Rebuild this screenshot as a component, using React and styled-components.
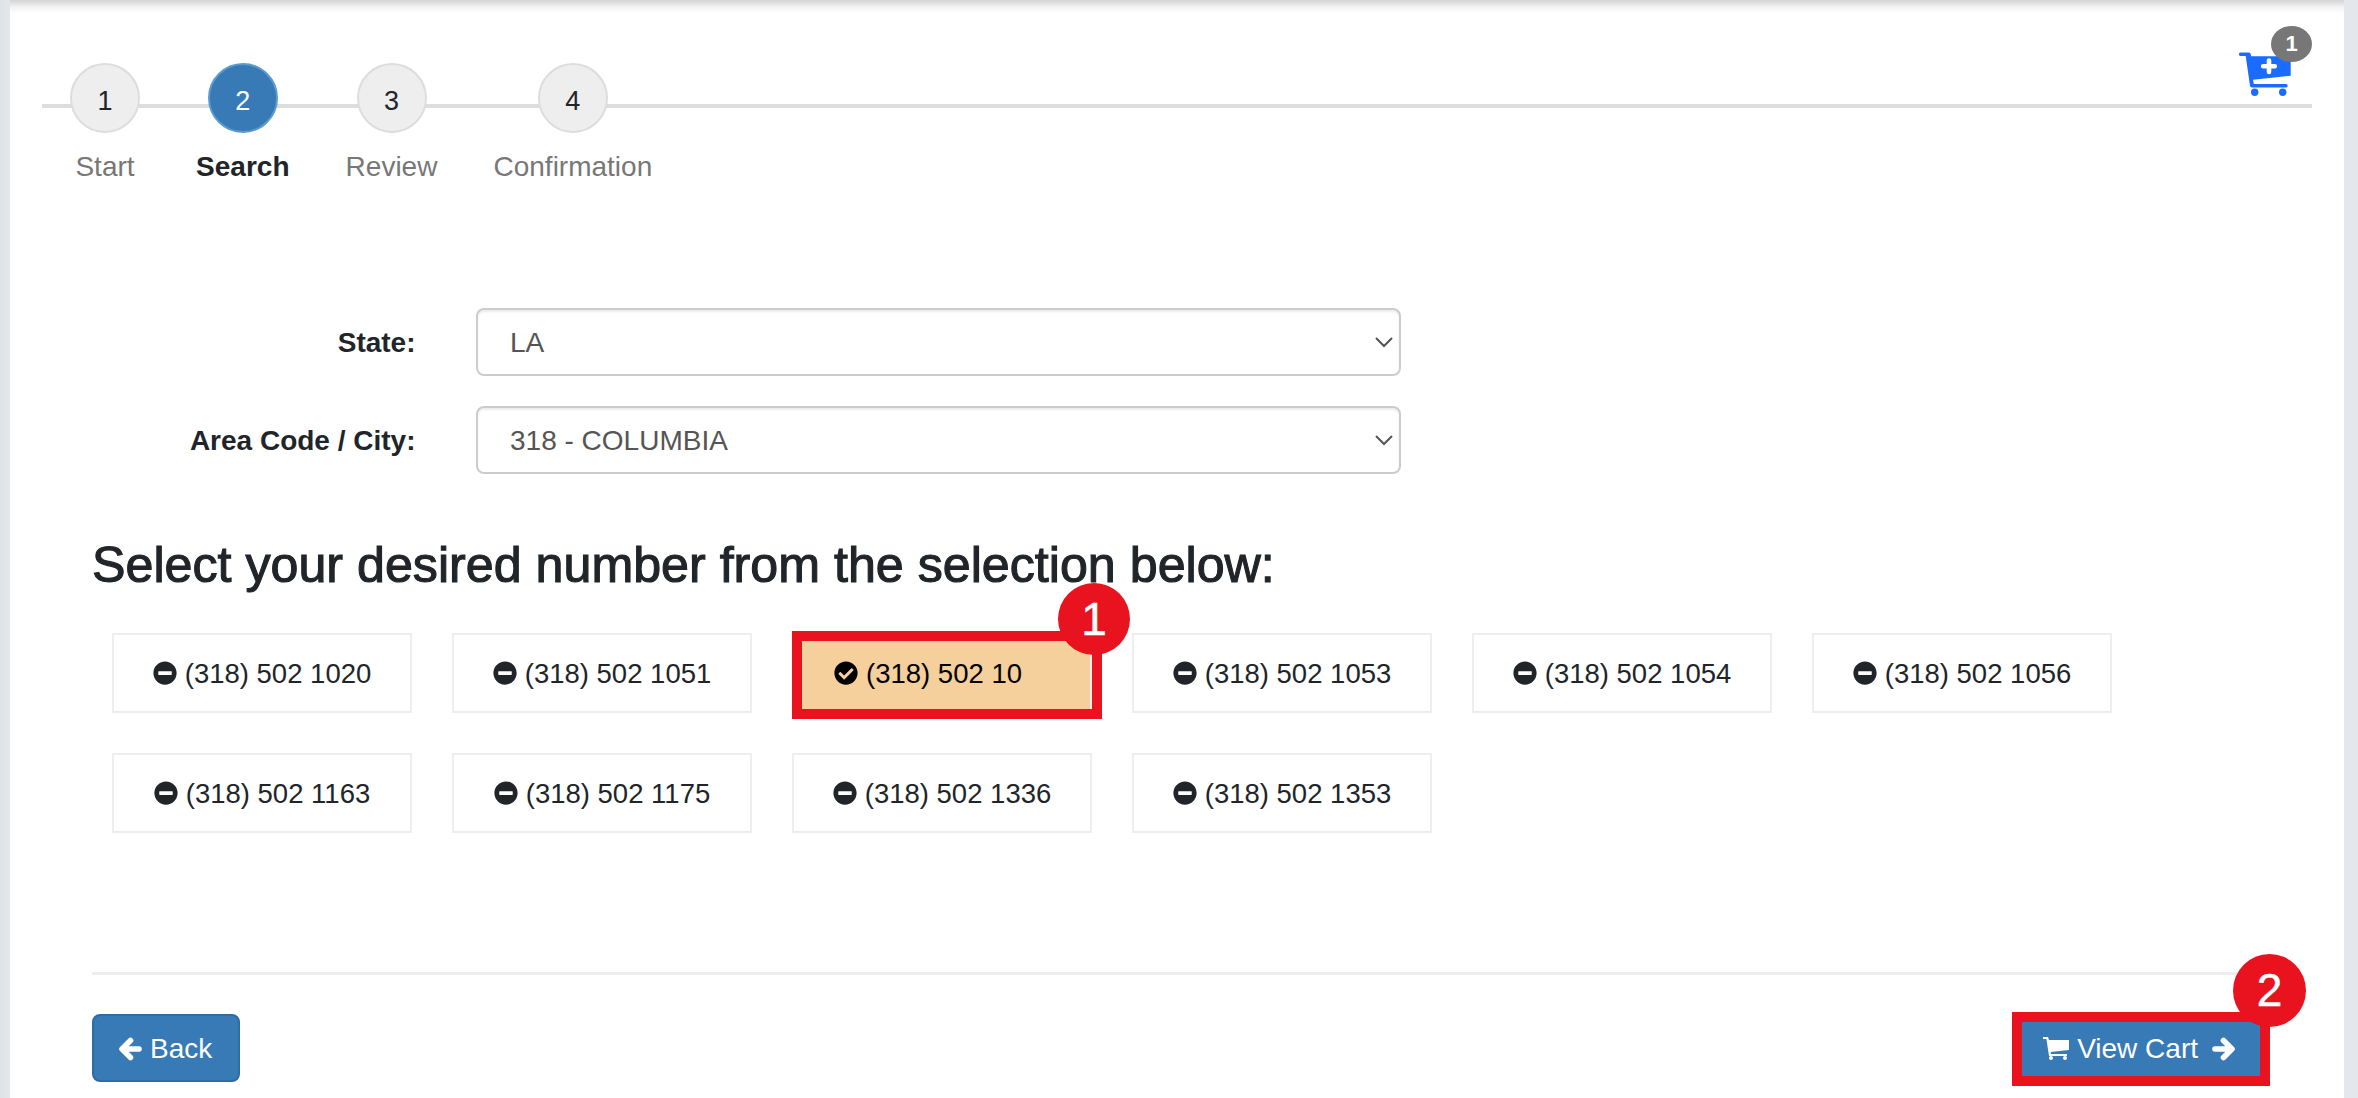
import React from 'react';
import styled, { createGlobalStyle } from 'styled-components';
import { FaCheckCircle, FaMinusCircle } from 'react-icons/fa';

const GlobalStyle = createGlobalStyle`
  html, body {
    margin: 0;
    padding: 0;
    background: #e9edf2;
  }
  body {
    font-family: "Liberation Sans", Arial, sans-serif;
    color: #212529;
    overflow: hidden;
  }
`

const Page = styled.div`
  width: 2358px;
  height: 1098px;
  padding: 0 14px 0 10px;
  box-sizing: border-box;
  background: linear-gradient(to right, #dee3e7 0, #e4e8ec 10px);
`

const Panel = styled.main`
  height: 1098px;
  box-sizing: border-box;
  padding-top: 63px;
  background: linear-gradient(to bottom, #d4d4d4 0, #f3f3f3 7px, #fff 14px);
  overflow: hidden;
`

const Stepper = styled.div`
  position: relative;
  display: flex;
  gap: 56.1px;
  margin: 0 32px;
  padding-left: 28px;
  height: 124px;

  &::before {
    content: '';
    position: absolute;
    left: 0;
    right: 0;
    top: 41px;
    height: 4px;
    background: #ddd;
  }
`

const Step = styled.div`
  position: relative;
  display: flex;
  flex-direction: column;
  align-items: center;
`

const StepCircle = styled.div`
  width: 70px;
  height: 70px;
  box-sizing: border-box;
  border-radius: 50%;
  border: 2px solid ${props => props.$active ? '#5b9bd1' : '#ddd'};
  background: ${props => props.$active ? '#377ab6' : '#eee'};
  color: ${props => props.$active ? '#fff' : '#212529'};
  font-size: 27px;
  display: flex;
  align-items: center;
  justify-content: center;
  padding-top: 6px;
`

const StepLabel = styled.div`
  margin-top: 14px;
  font-size: 28px;
  line-height: 40px;
  white-space: nowrap;
  font-weight: ${props => props.$active ? 700 : 400};
  color: ${props => props.$active ? '#212529' : '#777'};
`

const CartLink = styled.div`
  position: absolute;
  top: -11px;
  right: 21px;
  width: 52px;
  height: 44px;

  svg {
    display: block;
    width: 52px;
    height: 44px;
  }
`

const CartCount = styled.span`
  position: absolute;
  top: -26px;
  right: -21px;
  width: 41px;
  height: 36px;
  border-radius: 50%;
  background: #777;
  color: #fff;
  font-size: 22px;
  font-weight: 700;
  line-height: 36px;
  text-align: center;
`

const Form = styled.form`
  margin: 121px 0 0 82px;
  display: flex;
  flex-direction: column;
  gap: 30px;
`

const FormRow = styled.div`
  display: flex;
  align-items: center;
  gap: 60.5px;
`

const FieldLabel = styled.label`
  width: 323.5px;
  padding-top: 2px;
  text-align: right;
  font-size: 28px;
  font-weight: 700;
`

const SelectWrap = styled.div`
  position: relative;
  width: 925px;
  height: 68px;

  svg {
    position: absolute;
    top: 29px;
    right: 8px;
    width: 18px;
    height: 11px;
    pointer-events: none;
  }
`

const Select = styled.select`
  appearance: none;
  width: 100%;
  height: 100%;
  box-sizing: border-box;
  padding: 0 32px;
  border: 2px solid #ccc;
  border-radius: 8px;
  background: #fff;
  box-shadow: inset 0 2px 2px rgba(0, 0, 0, 0.075);
  color: #555;
  font-family: inherit;
  font-size: 28px;
`

const Heading = styled.h3`
  margin: 61px 0 0 82px;
  font-size: 50.2px;
  line-height: 60px;
  font-weight: 400;
  -webkit-text-stroke: 1.1px #212529;
  white-space: nowrap;
`

const NumberGrid = styled.div`
  display: grid;
  grid-template-columns: repeat(6, 300px);
  grid-auto-rows: 80px;
  gap: 40px;
  margin: 38px 0 0 102px;
`

const NumberTile = styled.div`
  position: relative;
  display: flex;
  align-items: center;
  gap: 8px;
  box-sizing: border-box;
  border: 2px solid #eee;
  background: ${props => props.$selected ? '#f5cf9c' : '#fff'};
  color: ${props => props.$selected ? '#000' : '#212529'};
  font-size: 27.5px;
  padding-top: 2px;
  justify-content: ${props => props.$selected ? 'flex-start' : 'center'};
  padding-left: ${props => props.$selected ? '40px' : '0'};

  svg {
    width: 24px;
    height: 24px;
    flex: none;
    margin-top: -2px;
  }
`

const Highlight = styled.div`
  position: absolute;
  box-sizing: border-box;
  border: 10px solid #e8131f;
  top: ${props => props.$top}px;
  left: ${props => props.$left}px;
  right: ${props => props.$right}px;
  bottom: ${props => props.$bottom}px;
  pointer-events: none;
`

const Marker = styled.div`
  position: absolute;
  top: ${props => props.$top}px;
  right: ${props => props.$right}px;
  width: ${props => props.$size}px;
  height: ${props => props.$size}px;
  border-radius: 50%;
  background: #e8131f;
  color: #fff;
  font-size: 46px;
  line-height: ${props => props.$size}px;
  text-align: center;
  -webkit-text-stroke: 0.5px #fff;
`

const Divider = styled.hr`
  margin: 139px 82px 0 82px;
  height: 3px;
  border: 0;
  background: #eee;
`

const Footer = styled.div`
  display: flex;
  justify-content: space-between;
  margin: 39px 82px 0 82px;
`

const Button = styled.button`
  position: relative;
  display: flex;
  align-items: center;
  gap: 8px;
  height: 68px;
  box-sizing: border-box;
  padding: 1px ${props => props.$padRight}px 0 25px;
  border: 2px solid #2e6da4;
  border-radius: 8px;
  background: #377ab6;
  color: #fff;
  font-family: inherit;
  font-size: 28px;

  svg {
    flex: none;
  }
`

const ArrowSvg = styled.svg`
  width: 23px;
  height: 24px;
  margin-left: ${props => props.$space || 0}px;
  transform: ${props => props.$flip ? 'scaleX(-1)' : 'none'};
`

const CartSvg = styled.svg`
  width: 26px;
  height: 23px;
`

const numbers = [
  '1020', '1051', '10', '1053', '1054', '1056',
  '1163', '1175', '1336', '1353',
]

const steps = ['Start', 'Search', 'Review', 'Confirmation']

const Chevron = () => (
  <svg viewBox="0 0 18 11" fill="none" stroke="#555" strokeWidth="2">
    <path d="M1 1l8 8 8-8" />
  </svg>
)

const Arrow = props => (
  <ArrowSvg viewBox="0 0 23 24" fill="none" stroke="#fff" strokeWidth="5.6" strokeLinecap="round" strokeLinejoin="round" {...props}>
    <path d="M3 12h16M11.5 3.5l8.5 8.5-8.5 8.5" />
  </ArrowSvg>
)

const Cart = () => (
  <CartSvg viewBox="0 0 26 23" fill="#fff">
    <path d="M0 0h5l1 3h20v10L7.6 15l.4 2h16v2H6L3.4 2H0z" />
    <circle cx="8" cy="21" r="2" />
    <circle cx="22" cy="21" r="2" />
  </CartSvg>
)

const CartPlus = () => (
  <svg viewBox="0 0 52 44">
    <path fill="#1a6bff" d="M1.7.5h8a2 2 0 0 1 2 1.6l.4 2.2h39.6v19.4L14 27.7l.8 4.3H47a1.7 1.7 0 0 1 0 3.4H13a2 2 0 0 1-2-1.6L6.7 4H1.7a1.75 1.75 0 0 1 0-3.5z" />
    <circle fill="#1a6bff" cx="15.7" cy="40.3" r="3.7" />
    <circle fill="#1a6bff" cx="43.7" cy="40.3" r="3.7" />
    <path fill="none" stroke="#fff" strokeWidth="4.6" strokeLinecap="round" d="M30 8.6v11.4M24.2 14.3h11.6" />
  </svg>
)

export default function App() {
  return (
    <Page>
      <GlobalStyle />
      <Panel>
        <Stepper>
          {steps.map((label, i) => (
            <Step key={label}>
              <StepCircle $active={i === 1}>{i + 1}</StepCircle>
              <StepLabel $active={i === 1}>{label}</StepLabel>
            </Step>
          ))}
          <CartLink>
            <CartPlus />
            <CartCount>1</CartCount>
          </CartLink>
        </Stepper>

        <Form>
          <FormRow>
            <FieldLabel>State:</FieldLabel>
            <SelectWrap>
              <Select defaultValue="LA"><option>LA</option></Select>
              <Chevron />
            </SelectWrap>
          </FormRow>
          <FormRow>
            <FieldLabel>Area Code / City:</FieldLabel>
            <SelectWrap>
              <Select defaultValue="318 - COLUMBIA"><option>318 - COLUMBIA</option></Select>
              <Chevron />
            </SelectWrap>
          </FormRow>
        </Form>

        <Heading>Select your desired number from the selection below:</Heading>

        <NumberGrid>
          {numbers.map(n => {
            const selected = n === '10'
            return (
              <NumberTile key={n} $selected={selected}>
                {selected ? <FaCheckCircle /> : <FaMinusCircle />}
                (318) 502 {n}
                {selected && <Highlight $top={-4} $left={-2} $right={-12} $bottom={-8} />}
                {selected && <Marker $top={-52} $right={-40} $size={72}>1</Marker>}
              </NumberTile>
            )
          })}
        </NumberGrid>

        <Divider />

        <Footer>
          <Button $padRight={26}><Arrow $flip />Back</Button>
          <Button $padRight={25}>
            <Cart />
            View Cart
            <Arrow $space={6} />
            <Highlight $top={-4} $left={-6} $right={-10} $bottom={-6} />
            <Marker $top={-62} $right={-46} $size={73}>2</Marker>
          </Button>
        </Footer>
      </Panel>
    </Page>
  );
}
